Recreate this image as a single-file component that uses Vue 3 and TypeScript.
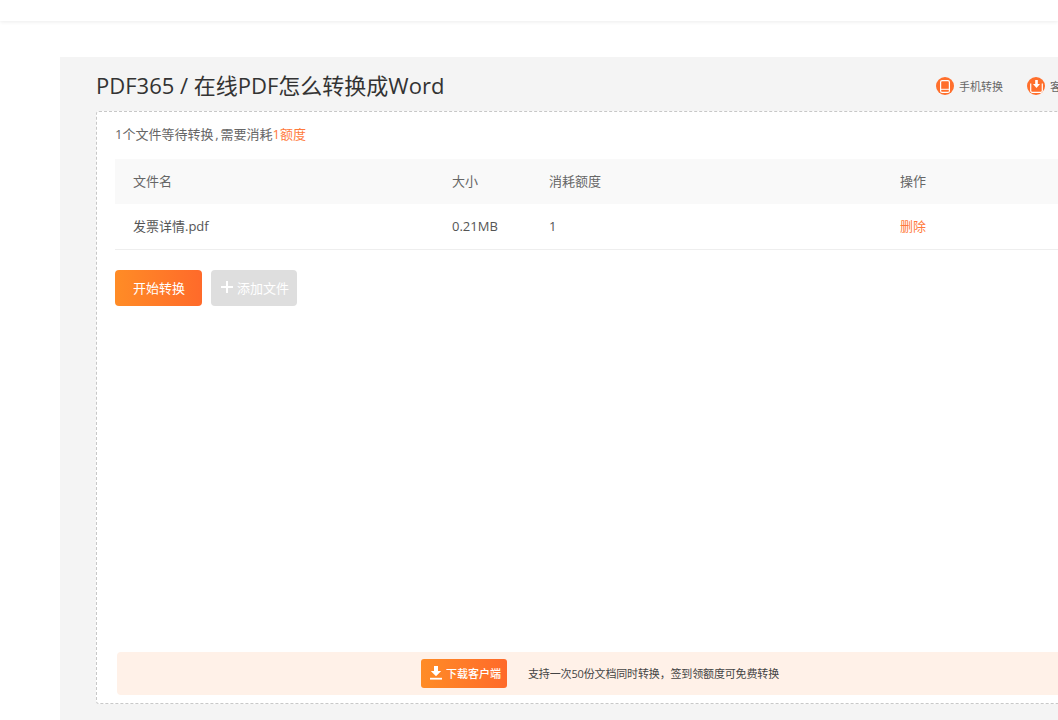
<script setup lang="ts">
// PDF365 conversion page: wide panel clipped by the window on the right.
interface FileRow { name: string; size: string; cost: number }
const files: FileRow[] = [{ name: '发票详情.pdf', size: '0.21MB', cost: 1 }];
</script>

<template>
  <div class="page">
    <div class="topbar"></div>
    <main class="panel">
      <header class="head">
        <h1 class="title">PDF365 / 在线PDF怎么转换成Word</h1>
        <div class="links">
          <a class="link">
            <span class="badge">
              <svg width="10" height="13" viewBox="0 0 10 13">
                <rect x="0.6" y="0.6" width="8.800" height="11.800" rx="1.500" fill="none" stroke="#fff" stroke-width="1.200" />
                <path d="M1 9.300h8" stroke="#fff" stroke-width="1" />
              </svg>
            </span>
            手机转换
          </a>
          <a class="link">
            <span class="badge">
              <svg width="13" height="13" viewBox="0 0 13 13">
                <path d="M.7 3.500v7.300a1.500 1.500 0 0 0 1.500 1.500h8.600a1.500 1.500 0 0 0 1.500-1.500V3.500" fill="none" stroke="#fff" stroke-width="1.200" />
                <path d="M5.200 0h2.600v4h2.200L6.500 8 3 4h2.200z" fill="#fff" />
              </svg>
            </span>
            客户端下载
          </a>
        </div>
      </header>

      <section class="card">
        <p class="summary">1个文件等待转换 , 需要消耗<em>1额度</em></p>
        <div class="table">
          <div class="row row-head">
            <span>文件名</span>
            <span>大小</span>
            <span>消耗额度</span>
            <span>操作</span>
          </div>
          <div v-for="file in files" :key="file.name" class="row row-body">
            <span>{{ file.name }}</span>
            <span>{{ file.size }}</span>
            <span>{{ file.cost }}</span>
            <a class="del">删除</a>
          </div>
        </div>
        <div class="actions">
          <button class="btn btn-start">开始转换</button>
          <button class="btn btn-add">
            <svg width="12" height="12" viewBox="0 0 12 12"><path d="M6 0v12M0 6h12" stroke="#fff" stroke-width="2" /></svg>
            添加文件
          </button>
        </div>
        <div class="banner">
          <a class="dl">
            <svg width="12" height="14" viewBox="0 0 12 14">
              <path d="M4 0h4v5h3.200L6 10.200.8 5H4z" fill="#fff" />
              <path d="M0 12.700h12" stroke="#fff" stroke-width="1.800" />
            </svg>
            下载客户端
          </a>
          <span class="tip">支持一次50份文档同时转换，签到领额度可免费转换</span>
        </div>
      </section>
    </main>
  </div>
</template>

<style>
html, body { margin: 0; overflow: hidden; background: #fff; }
</style>

<style scoped>
.page {
  width: 1058px;
  height: 720px;
  overflow: hidden;
  font-family: "Open Sans", "Noto Sans CJK SC", sans-serif;
  color: #333;
}
.topbar {
  height: 21px;
  background: #fff;
  box-shadow: 0 1px 4px rgba(0, 0, 0, 0.08);
}
.panel {
  box-sizing: border-box;
  width: 1080px;
  height: 663px;
  margin: 36px 0 0 60px;
  padding: 0 36px;
  background: #f4f4f4;
}
.head {
  display: flex;
  justify-content: space-between;
  align-items: center;
  width: 1009px;
  height: 54px;
  padding-top: 4px;
  box-sizing: border-box;
}
.title {
  margin: -2px 0 0;
  font-size: 22px;
  font-weight: 400;
  line-height: 50px;
  color: #333;
}
.links { display: flex; gap: 24px; flex-shrink: 0; white-space: nowrap; }
.link {
  display: flex;
  align-items: center;
  gap: 5px;
  font-size: 11px;
  color: #666;
}
.badge {
  display: flex;
  align-items: center;
  justify-content: center;
  width: 18px;
  height: 18px;
  border-radius: 50%;
  background: #ff6f2c;
}
.card {
  box-sizing: border-box;
  width: 1008px;
  height: 593px;
  padding: 13px 18px 8px;
  display: flex;
  flex-direction: column;
  background: #fff;
  border: 1px dashed #c8c8c8;
  border-radius: 3px;
}
.summary {
  margin: 0;
  font-size: 13px;
  line-height: 18px;
  word-spacing: -1.500px;
  color: #666;
}
.summary em { font-style: normal; color: #ff7a3c; }
.table { margin-top: 16px; font-size: 13px; }
.row {
  display: grid;
  grid-template-columns: 319px 97px 351px 1fr;
  align-items: center;
  padding-left: 18px;
}
.row-head { height: 45px; padding-bottom: 2px; box-sizing: border-box; background: #f9f9f9; color: #666; }
.row-body { height: 46px; padding-bottom: 2px; box-sizing: border-box; border-bottom: 1px solid #eee; color: #555; }
.del { color: #ff7a3c; }
.actions { display: flex; gap: 9px; margin-top: 20px; }
.btn {
  display: flex;
  align-items: center;
  justify-content: center;
  gap: 4px;
  height: 36px;
  padding: 0 0 2px;
  border: 0;
  border-radius: 4px;
  font: inherit;
  font-size: 13px;
  color: #fff;
}
.btn-start { width: 87px; padding-left: 1px; background: linear-gradient(90deg, #ff8c26, #ff6a2a); }
.btn-add { width: 86px; padding-left: 2px; background: #dedede; }
.banner {
  display: flex;
  align-items: center;
  justify-content: center;
  gap: 21px;
  height: 43px;
  margin: auto 2px 0;
  background: #fff1e8;
  border-radius: 4px;
}
.dl {
  display: flex;
  align-items: center;
  gap: 4px;
  width: 86px;
  height: 29px;
  padding: 0 0 2px 9px;
  box-sizing: border-box;
  border-radius: 3px;
  background: linear-gradient(90deg, #ff8c26, #ff6a2a);
  color: #fff;
  font-size: 11px;
  font-weight: 500;
}
.tip { padding-bottom: 2px; font-size: 11px; letter-spacing: -0.15px; color: #444; }
</style>
